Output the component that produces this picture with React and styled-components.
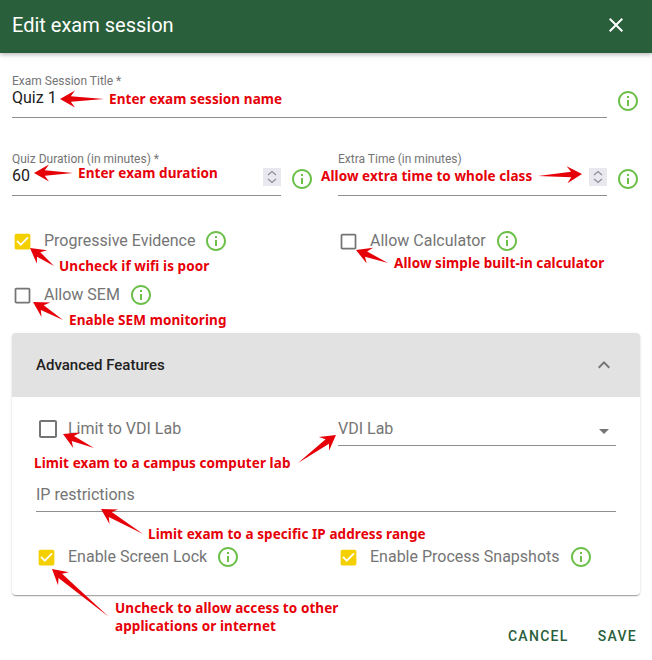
import React from 'react';
import styled, { createGlobalStyle } from 'styled-components';

const Global = createGlobalStyle`
  html, body { margin: 0; padding: 0; background: #fff; }
  * { box-sizing: border-box; }
`;

const GREEN = '#2a5f3b';
const LINE = '#8f8f8f';

const Dialog = styled.div`
  position: relative;
  width: 652px;
  height: 660px;
  overflow: hidden;
  background: #fff;
  font-family: Roboto, "Liberation Sans", sans-serif;
  color: #757575;
`;
const Header = styled.header`
  position: relative;
  height: 53px;
  padding: 0 24px 3px 12px;
  display: flex;
  align-items: center;
  justify-content: space-between;
  background: ${GREEN};
  color: #fff;
  box-shadow: 0 2px 4px rgba(0, 0, 0, 0.25);
`;
const Title = styled.h2`
  margin: 0;
  font-size: 20px;
  font-weight: 400;
  line-height: 26px;
`;
const CloseIcon = styled.svg`
  width: 24px;
  height: 24px;
  fill: #fff;
`;
const Form = styled.div`
  padding: 20px 12px 0;
`;
const FieldRow = styled.div`
  display: flex;
  align-items: flex-start;
  margin-bottom: ${p => p.$mb || 0}px;
`;
const Columns = styled.div`
  display: grid;
  grid-template-columns: 326px 1fr;
`;
const Field = styled.div`
  width: ${p => (p.$w ? `${p.$w}px` : 'auto')};
  flex: ${p => (p.$w ? 'none' : '1')};
  height: 45px;
  padding-top: 1px;
  border-bottom: 1px solid ${LINE};
  position: relative;
`;
const SmallLabel = styled.div`
  font-size: 12px;
  line-height: 14px;
  color: #757575;
`;
const Value = styled.div`
  font-size: 16px;
  line-height: 20px;
  color: #212121;
  min-height: 20px;
`;
const Spinner = styled.div`
  position: absolute;
  right: 0;
  top: 17px;
  width: 18px;
  height: 18px;
  background: #e8e8ee;
  display: flex;
  align-items: center;
  justify-content: center;
`;
const SpinnerIcon = styled.svg`
  width: 14px;
  height: 16px;
  fill: none;
  stroke: #8d8d96;
  stroke-width: 1.2;
`;
const InfoWrap = styled.svg`
  flex: none;
  width: 24px;
  height: 24px;
  fill: #6cc04a;
  margin-left: 9px;
  margin-top: ${p => p.$mt || 0}px;
`;
const Checks = styled.div`
  margin-top: 33px;
  display: grid;
  grid-template-columns: 326px 1fr;
  row-gap: 30px;
`;
const CheckRow = styled.div`
  display: flex;
  align-items: center;
  height: 24px;
`;
const CheckIcon = styled.svg`
  flex: none;
  width: ${p => (p.$large ? 24 : 21)}px;
  height: ${p => (p.$large ? 24 : 21)}px;
  margin-right: ${p => (p.$large ? 8 : 11)}px;
  fill: ${p => (p.$checked ? '#f5d000' : '#757575')};
`;
const CheckLabel = styled.span`
  font-size: 16px;
  line-height: 20px;
  color: #757575;
`;
const Panel = styled.section`
  margin-top: 26px;
  border-radius: 4px;
  background: #fff;
  box-shadow: 0 2px 1px -1px rgba(0, 0, 0, 0.2), 0 1px 1px 0 rgba(0, 0, 0, 0.14), 0 1px 3px 0 rgba(0, 0, 0, 0.12);
  overflow: hidden;
`;
const PanelHead = styled.div`
  height: 64px;
  padding: 0 24px;
  background: #e2e2e2;
  display: flex;
  align-items: center;
  justify-content: space-between;
`;
const PanelTitle = styled.div`
  font-size: 15px;
  font-weight: 500;
  color: #212121;
`;
const Chevron = styled.svg`
  width: 24px;
  height: 24px;
  fill: #757575;
`;
const PanelBody = styled.div`
  padding: 20px 24px 26px;
`;
const InnerGrid = styled.div`
  display: grid;
  grid-template-columns: 302px 1fr;
`;
const Select = styled.div`
  padding-top: 2px;
  height: 29px;
  border-bottom: 1px solid ${LINE};
  display: flex;
  justify-content: space-between;
  font-size: 16px;
  line-height: 20px;
`;
const Caret = styled.svg`
  width: 24px;
  height: 24px;
  fill: #757575;
`;
const TextInput = styled.div`
  margin: 39px 0 33px;
  height: 27px;
  border-bottom: 1px solid ${LINE};
  font-size: 16px;
  line-height: 20px;
`;
const Footer = styled.footer`
  display: flex;
  justify-content: flex-end;
  gap: 13px;
  margin-right: -5px;
  padding-top: 23px;
`;
const Action = styled.button`
  height: 36px;
  padding: 0 8px;
  border: 0;
  background: none;
  font-family: inherit;
  font-size: 14px;
  font-weight: 500;
  letter-spacing: 1.3px;
  color: ${GREEN};
`;
const Arrows = styled.svg`
  position: absolute;
  left: 0;
  top: 0;
  width: 652px;
  height: 660px;
  pointer-events: none;
  fill: #e60008;
`;
const Note = styled.div`
  position: absolute;
  left: ${p => p.$x}px;
  top: ${p => p.$y - 10}px;
  font-family: "Noto Sans", "Open Sans", sans-serif;
  font-size: 13.5px;
  font-weight: 700;
  line-height: 20px;
  letter-spacing: 0.08px;
  white-space: nowrap;
  color: #e60008;
`;

const Info = ({ mt }) => (
  <InfoWrap viewBox="0 0 24 24" $mt={mt}>
    <path d="M11 7h2v2h-2zm0 4h2v6h-2zm1-9C6.48 2 2 6.48 2 12s4.48 10 10 10 10-4.48 10-10S17.52 2 12 2zm0 18c-4.41 0-8-3.59-8-8s3.59-8 8-8 8 3.59 8 8-3.59 8-8 8z" />
  </InfoWrap>
);

const Check = ({ label, checked, large, info }) => (
  <CheckRow>
    <CheckIcon viewBox="0 0 24 24" $checked={checked} $large={large}>
      {checked ? (
        <path d="M19 3H5c-1.11 0-2 .9-2 2v14c0 1.1.89 2 2 2h14c1.11 0 2-.9 2-2V5c0-1.1-.89-2-2-2zm-9 14l-5-5 1.41-1.41L10 14.17l7.59-7.59L19 8l-9 9z" />
      ) : (
        <path d="M19 5v14H5V5h14m0-2H5c-1.1 0-2 .9-2 2v14c0 1.1.9 2 2 2h14c1.1 0 2-.9 2-2V5c0-1.1-.9-2-2-2z" />
      )}
    </CheckIcon>
    <CheckLabel>{label}</CheckLabel>
    {info && <Info />}
  </CheckRow>
);

const Spin = () => (
  <Spinner>
    <SpinnerIcon viewBox="0 0 14 16">
      <path d="M3 6l4-3.5L11 6M3 10l4 3.5L11 10" />
    </SpinnerIcon>
  </Spinner>
);

function arrowPoints([tx, ty], [hx, hy], len = 15, wide = 8.5) {
  const d = Math.hypot(hx - tx, hy - ty);
  const ux = (hx - tx) / d;
  const uy = (hy - ty) / d;
  const nx = -uy;
  const ny = ux;
  const at = (back, side) => `${(hx - ux * back + nx * side).toFixed(1)},${(hy - uy * back + ny * side).toFixed(1)}`;
  return [
    at(0, 0),
    at(len, wide),
    at(len * 0.72, 2.8),
    `${tx},${ty}`,
    at(len * 0.72, -2.8),
    at(len, -wide),
  ].join(' ');
}

const ARROWS = [
  [[104, 99], [60, 99]],
  [[73, 173], [34, 173]],
  [[538, 176], [582, 174]],
  [[54, 266], [30, 248]],
  [[63, 320], [33, 302]],
  [[388, 263], [356, 250]],
  [[94, 448], [63, 434]],
  [[298, 463], [336, 435]],
  [[143, 534], [101, 509]],
  [[109, 617], [52, 569]],
];

const NOTES = [
  ['Enter exam session name', 109, 99],
  ['Enter exam duration', 78, 173],
  ['Allow extra time to whole class', 321, 176],
  ['Uncheck if wifi is poor', 59, 266],
  ['Allow simple built-in calculator', 394, 263],
  ['Enable SEM monitoring', 69, 320],
  ['Limit exam to a campus computer lab', 34, 463],
  ['Limit exam to a specific IP address range', 148, 534],
  ['Uncheck to allow access to other', 115, 608],
  ['applications or internet', 115, 626],
];

export default function App() {
  return (
    <>
      <Global />
      <Dialog>
        <Header>
          <Title>Edit exam session</Title>
          <CloseIcon viewBox="0 0 24 24">
            <path d="M19 6.41L17.59 5 12 10.59 6.41 5 5 6.41 10.59 12 5 17.59 6.41 19 12 13.41 17.59 19 19 17.59 13.41 12z" />
          </CloseIcon>
        </Header>
        <Form>
          <FieldRow $mb={33}>
            <Field>
              <SmallLabel>Exam Session Title *</SmallLabel>
              <Value>Quiz 1</Value>
            </Field>
            <Info mt={16} />
          </FieldRow>
          <Columns>
            <FieldRow>
              <Field $w={269}>
                <SmallLabel>Quiz Duration (in minutes) *</SmallLabel>
                <Value>60</Value>
                <Spin />
              </Field>
              <Info mt={16} />
            </FieldRow>
            <FieldRow>
              <Field $w={269}>
                <SmallLabel>Extra Time (in minutes)</SmallLabel>
                <Value />
                <Spin />
              </Field>
              <Info mt={16} />
            </FieldRow>
          </Columns>
          <Checks>
            <Check label="Progressive Evidence" checked info />
            <Check label="Allow Calculator" info />
            <Check label="Allow SEM" info />
          </Checks>
          <Panel>
            <PanelHead>
              <PanelTitle>Advanced Features</PanelTitle>
              <Chevron viewBox="0 0 24 24">
                <path d="M12 8l-6 6 1.41 1.41L12 10.83l4.59 4.58L18 14z" />
              </Chevron>
            </PanelHead>
            <PanelBody>
              <InnerGrid>
                <Check label="Limit to VDI Lab" large />
                <Select>
                  VDI Lab
                  <Caret viewBox="0 0 24 24">
                    <path d="M7 10l5 5 5-5z" />
                  </Caret>
                </Select>
              </InnerGrid>
              <TextInput>IP restrictions</TextInput>
              <InnerGrid>
                <Check label="Enable Screen Lock" checked info />
                <Check label="Enable Process Snapshots" checked info />
              </InnerGrid>
            </PanelBody>
          </Panel>
          <Footer>
            <Action>CANCEL</Action>
            <Action>SAVE</Action>
          </Footer>
        </Form>
        <Arrows viewBox="0 0 652 660">
          {ARROWS.map(([t, h]) => (
            <polygon key={`${t}-${h}`} points={arrowPoints(t, h)} />
          ))}
        </Arrows>
        {NOTES.map(([text, x, y]) => (
          <Note key={text} $x={x} $y={y}>{text}</Note>
        ))}
      </Dialog>
    </>
  );
}
